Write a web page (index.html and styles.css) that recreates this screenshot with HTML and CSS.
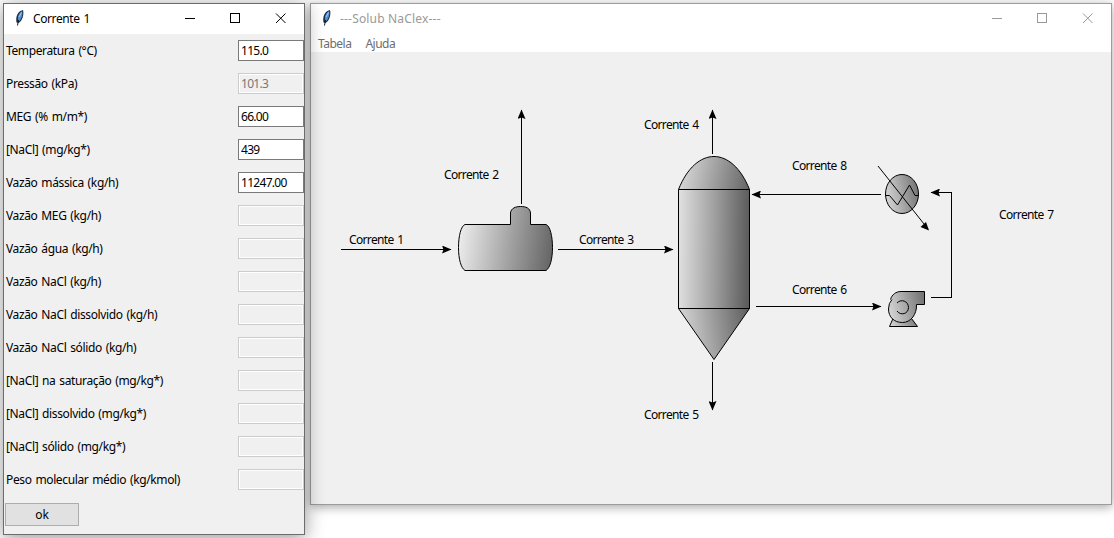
FILE: index.html
```html
<!DOCTYPE html>
<html lang="pt">
<head>
<meta charset="utf-8">
<title>Solub NaClex</title>
<link rel="stylesheet" href="styles.css">
</head>
<body>
<main class="desktop">
  <section class="window main-window">
    <header class="titlebar">
      <svg class="feather" width="16" height="18" viewBox="0 0 16 18"><path d="M4.500 13.500C3.500 9 5 2 11 1C12.200 5 10.500 12 6.500 14Z" fill="#1b2c42"/><path d="M6 11.500C5.500 7 7 3.500 10.300 2C11 6 9.500 9.500 7 12.500Z" fill="#4f90d4"/><path d="M5.500 16.500L6.500 11" fill="none" stroke="#111c2a"/><path d="M7 8L9.500 3.500" stroke="#a3cdf0"/></svg>
      <h1 class="title title-main">---Solub NaClex---</h1>
      <svg class="controls" width="138" height="30" viewBox="0 0 138 30" shape-rendering="crispEdges"><path d="M18 14.500h10M63.500 9.500h9v9h-9z"/><path shape-rendering="auto" d="M109 9.500l9.500 9.500m0-9.500l-9.500 9.500"/></svg>
    </header>
    <nav class="menu"><span>Tabela</span><span>Ajuda</span></nav>
    <svg class="diagram" viewBox="311 52 800 452" width="800" height="452">
      <defs>
        <linearGradient id="tank" x1="0" y1="0.4" x2="1" y2="0.5"><stop offset="0" stop-color="#eeeeee"/><stop offset=".55" stop-color="#a4a4a4"/><stop offset="1" stop-color="#686868"/></linearGradient>
        <linearGradient id="column" x1="0" y1=".48" x2="1" y2=".5"><stop offset="0" stop-color="#e0e0e0"/><stop offset=".5" stop-color="#a0a0a0"/><stop offset="1" stop-color="#5a5a5a"/></linearGradient>
        <linearGradient id="dome" x1="0" y1=".5" x2="1" y2=".6"><stop offset="0" stop-color="#dcdcdc"/><stop offset="1" stop-color="#686868"/></linearGradient>
        <linearGradient id="cone" x1="0" y1=".2" x2="1" y2=".1"><stop offset="0" stop-color="#d8d8d8"/><stop offset="1" stop-color="#5d5d5d"/></linearGradient>
        <linearGradient id="small" x1="0" y1=".6" x2="1" y2=".4"><stop offset="0" stop-color="#d6d6d6"/><stop offset="1" stop-color="#757575"/></linearGradient>
        <marker id="arrow" markerUnits="userSpaceOnUse" markerWidth="10" markerHeight="8" refX="9" refY="4" orient="auto"><path d="M0 0L9.500 4L0 8L1.500 4Z"/></marker>
      </defs>
      <g class="flow" shape-rendering="crispEdges">
        <path d="M341 249.500H451"/><path d="M521.500 204V110"/><path d="M558 249.500H673"/><path d="M712.500 154V110"/><path d="M712.500 362V410"/><path d="M756 306.500H881"/><path d="M881 194.500H752"/><path d="M931 297.500H951.500V192.500H931"/>
      </g>
      <g class="equipment">
        <path fill="url(#tank)" d="M465 224.500H510.500V213C511 208 516 206.500 520.500 206.500C526 206.500 530 208 530.500 213V224.500H546C550 226 552.500 236 552.500 247.500C552.500 259 550 268 546 270.500H465C461 268 458.500 259 458.500 247.500C458.500 236 461 226 465 224.500Z"/>
        <path fill="url(#dome)" d="M678.500 189.500C696 145.500 732 145.500 749.500 189.500Z"/>
        <path fill="url(#column)" d="M678.500 189.500H749.500V308.500H678.500Z"/>
        <path fill="url(#cone)" d="M678.500 308.500H749.500L714 359.500Z"/>
        <ellipse fill="url(#small)" cx="902" cy="194" rx="16.500" ry="19.500"/>
        <path fill="none" d="M878 166L928 229M885.500 195.500H889.500L897.500 205L909.500 185L915 195.500H918.500"/>
        <path fill="#000" stroke="none" d="M929 230.500L920.500 227L926 222Z"/>
        <path fill="url(#small)" d="M893 318.500L889.500 326.500H917.500L911.500 318.500"/>
        <path fill="url(#small)" d="M890.500 299.500C892 294.500 896 291.500 901 291.500H924.500V304.500H916.500C917 314 911 322.500 902.500 322.500C894 322.500 888.500 317 888.500 309Q888.500 303 892 299.500"/>
        <path fill="none" d="M897 303C901 298.500 908.500 301 908.500 307.500C908.500 314 900.500 316 897 311"/>
      </g>
      <g class="stream-names">
        <text x="349" y="244" textLength="55">Corrente 1</text><text x="444" y="179" textLength="55">Corrente 2</text><text x="579" y="244" textLength="55">Corrente 3</text><text x="644" y="129" textLength="55">Corrente 4</text><text x="644" y="419" textLength="55">Corrente 5</text><text x="792" y="294" textLength="55">Corrente 6</text><text x="999" y="219" textLength="55">Corrente 7</text><text x="792" y="170" textLength="55">Corrente 8</text>
      </g>
    </svg>
  </section>

  <section class="window dialog">
    <header class="titlebar">
      <svg class="feather" width="16" height="18" viewBox="0 0 16 18"><path d="M4.500 13.500C3.500 9 5 2 11 1C12.200 5 10.500 12 6.500 14Z" fill="#1b2c42"/><path d="M6 11.500C5.500 7 7 3.500 10.300 2C11 6 9.500 9.500 7 12.500Z" fill="#4f90d4"/><path d="M5.500 16.500L6.500 11" fill="none" stroke="#111c2a"/><path d="M7 8L9.500 3.500" stroke="#a3cdf0"/></svg>
      <h2 class="title">Corrente 1</h2>
      <svg class="controls" width="138" height="30" viewBox="0 0 138 30" shape-rendering="crispEdges"><path d="M18 14.500h10M63.500 9.500h9v9h-9z"/><path shape-rendering="auto" d="M109 9.500l9.500 9.500m0-9.500l-9.500 9.500"/></svg>
    </header>
    <form class="form">
      <label class="row"><span>Temperatura (°C)</span><input value="115.0"></label>
      <label class="row"><span>Pressão (kPa)</span><input value="101.3" disabled></label>
      <label class="row"><span>MEG (% m/m*)</span><input value="66.00"></label>
      <label class="row"><span>[NaCl] (mg/kg*)</span><input value="439"></label>
      <label class="row"><span>Vazão mássica (kg/h)</span><input value="11247.00"></label>
      <label class="row"><span>Vazão MEG (kg/h)</span><input disabled></label>
      <label class="row"><span>Vazão água (kg/h)</span><input disabled></label>
      <label class="row"><span>Vazão NaCl (kg/h)</span><input disabled></label>
      <label class="row"><span>Vazão NaCl dissolvido (kg/h)</span><input disabled></label>
      <label class="row"><span>Vazão NaCl sólido (kg/h)</span><input disabled></label>
      <label class="row"><span>[NaCl] na saturação (mg/kg*)</span><input disabled></label>
      <label class="row"><span>[NaCl] dissolvido (mg/kg*)</span><input disabled></label>
      <label class="row"><span>[NaCl] sólido (mg/kg*)</span><input disabled></label>
      <label class="row"><span>Peso molecular médio (kg/kmol)</span><input disabled></label>
      <button class="ok" type="button">ok</button>
    </form>
  </section>
</main>
</body>
</html>
```
FILE: styles.css
```css
* { box-sizing: border-box; }
body { margin: 0; font: 12px/16px "Noto Sans", "Open Sans", sans-serif; letter-spacing: -0.37px; word-spacing: 1.1px; color: #000; background: #fff; }
.desktop { position: relative; width: 1114px; height: 538px; overflow: hidden; }
.window { position: absolute; top: 3px; background: #f0f0f0; border: 1px solid #6c6c6c; }
.main-window { left: 310px; width: 802px; height: 502px; border-color: #9c9c9c; box-shadow: 0 2px 10px rgba(0,0,0,.36); }
.dialog { left: 3px; width: 302px; height: 532px; box-shadow: 0 3px 18px rgba(0,0,0,.42); }
.titlebar { display: flex; height: 30px; background: #fff; align-items: flex-start; }
.feather { margin: 5px 0 0 8px; flex: none; }
.title { margin: 7px auto 0 5px; font-size: 12px; font-weight: 400; line-height: 16px; letter-spacing: -0.4px; }
.title-main { color: #999; letter-spacing: 0.18px; word-spacing: 0; }
.controls { flex: none; margin-right: -1px; fill: none; stroke: #000; stroke-width: 1; }
.main-window .controls { stroke: #999; }
.menu { display: flex; gap: 14px; height: 18px; padding: 2px 7px 0; background: #fff; color: #6d6d6d; letter-spacing: -0.5px; }
.diagram { display: block; }
.flow { fill: none; stroke: #000; }
.flow path { marker-end: url(#arrow); }
.equipment { stroke: #000; stroke-width: 1; }
.stream-names { font-size: 12px; letter-spacing: 0; }
.form { display: flex; flex-direction: column; }
.row { display: flex; height: 33px; align-items: center; justify-content: space-between; padding-left: 2px; }
.row input { width: 66px; height: 21px; padding: 0 2px; border: 1px solid #7a7a7a; border-radius: 0; background: #fff; color: #000; font: inherit; letter-spacing: -0.7px; }
.row input:disabled { border-color: #ccc; background: #f0f0f0; color: #777; box-shadow: inset 0 0 0 1px #fff; }
.ok { align-self: flex-start; width: 74px; height: 23px; margin: 7px 0 0 1px; padding: 0; border: 1px solid #adadad; background: #e1e1e1; color: #000; font: inherit; letter-spacing: 0; }
```
